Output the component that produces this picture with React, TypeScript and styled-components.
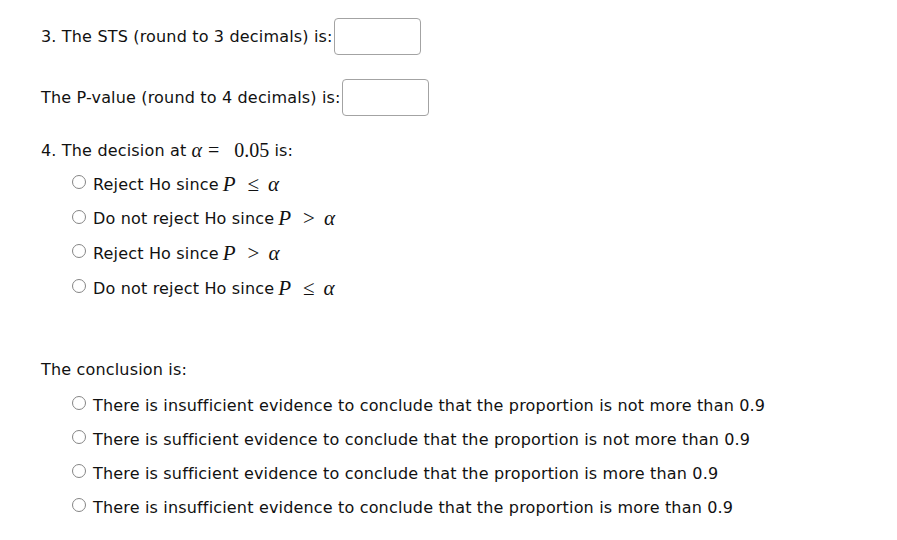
import React from "react";
import styled, { createGlobalStyle } from "styled-components";

const Global = createGlobalStyle`
  body {
    margin: 0;
    background: #ffffff;
    color: #111111;
    font-family: "DejaVu Sans", Verdana, sans-serif;
    font-size: 16px;
    letter-spacing: 0.17px;
  }
`;

const Page = styled.div`
  display: flex;
  flex-direction: column;
  padding: 18px 0 0 41px;
`;

const FieldRow = styled.div<{ $top: number }>`
  display: flex;
  align-items: center;
  height: 37px;
  margin-top: ${(p) => p.$top}px;
  white-space: nowrap;
`;

const AnswerBox = styled.input`
  box-sizing: border-box;
  width: 87px;
  height: 37px;
  margin: 0 0 0 1px;
  border: 1px solid #a3a3a3;
  border-radius: 4px;
  background: #fff;
  outline: none;
`;

const Heading = styled.div<{ $top: number }>`
  display: flex;
  align-items: center;
  height: 20px;
  margin-top: ${(p) => p.$top}px;
  white-space: nowrap;
`;

const OptionList = styled.div<{ $top: number; $gap: number }>`
  display: flex;
  flex-direction: column;
  gap: ${(p) => p.$gap}px;
  margin-top: ${(p) => p.$top}px;
  padding-left: 31px;
`;

const Option = styled.label`
  display: flex;
  align-items: center;
  height: 20px;
  white-space: nowrap;
`;

const Radio = styled.input.attrs({ type: "radio" })`
  appearance: none;
  box-sizing: border-box;
  width: 14px;
  height: 14px;
  margin: 0 7px 0 0;
  border: 1px solid #858585;
  border-radius: 50%;
  background: #fff;
  flex: none;
  position: relative;
  top: -2px;
`;

const Math = styled.span<{ $left: number; $size: number }>`
  font-family: "Liberation Serif", "Times New Roman", serif;
  font-size: ${(p) => p.$size}px;
  letter-spacing: 0;
  margin-left: ${(p) => p.$left}px;
  display: inline-flex;
  align-items: baseline;
`;

const Var = styled.i`
  font-style: italic;
`;

const Rel = styled.span<{ $l: number; $r: number }>`
  margin: 0 ${(p) => p.$r}px 0 ${(p) => p.$l}px;
`;

const Text = styled.span``;

function Rule({ rel }: { rel: string }) {
  return (
    <Math $left={4} $size={21}>
      <Var>P</Var>
      <Rel $l={12} $r={9}>{rel}</Rel>
      <Var>α</Var>
    </Math>
  );
}

const decisions: { text: string; rel: string }[] = [
  { text: "Reject Ho since", rel: "≤" },
  { text: "Do not reject Ho since", rel: ">" },
  { text: "Reject Ho since", rel: ">" },
  { text: "Do not reject Ho since", rel: "≤" },
];

const conclusions = [
  "There is insufficient evidence to conclude that the proportion is not more than 0.9",
  "There is sufficient evidence to conclude that the proportion is not more than 0.9",
  "There is sufficient evidence to conclude that the proportion is more than 0.9",
  "There is insufficient evidence to conclude that the proportion is more than 0.9",
];

export default function App() {
  return (
    <>
      <Global />
      <Page>
        <FieldRow $top={0}>
          <Text>3. The STS (round to 3 decimals) is:</Text>
          <AnswerBox type="text" aria-label="STS" />
        </FieldRow>
        <FieldRow $top={24}>
          <Text>The P-value (round to 4 decimals) is:</Text>
          <AnswerBox type="text" aria-label="P-value" />
        </FieldRow>
        <Heading $top={24}>
          <Text>4. The decision at</Text>
          <Math $left={5} $size={20}>
            <Var>α</Var>
            <Rel $l={6} $r={15}>=</Rel>
            <span>0.05</span>
          </Math>
          <Text>&nbsp;is:</Text>
        </Heading>
        <OptionList $top={14} $gap={14.7}>
          {decisions.map((d, i) => (
            <Option key={i}>
              <Radio name="decision" />
              <Text>{d.text}</Text>
              <Rule rel={d.rel} />
            </Option>
          ))}
        </OptionList>
        <Heading $top={61.3}>
          <Text>The conclusion is:</Text>
        </Heading>
        <OptionList $top={16} $gap={14}>
          {conclusions.map((c, i) => (
            <Option key={i}>
              <Radio name="conclusion" />
              <Text>{c}</Text>
            </Option>
          ))}
        </OptionList>
      </Page>
    </>
  );
}
